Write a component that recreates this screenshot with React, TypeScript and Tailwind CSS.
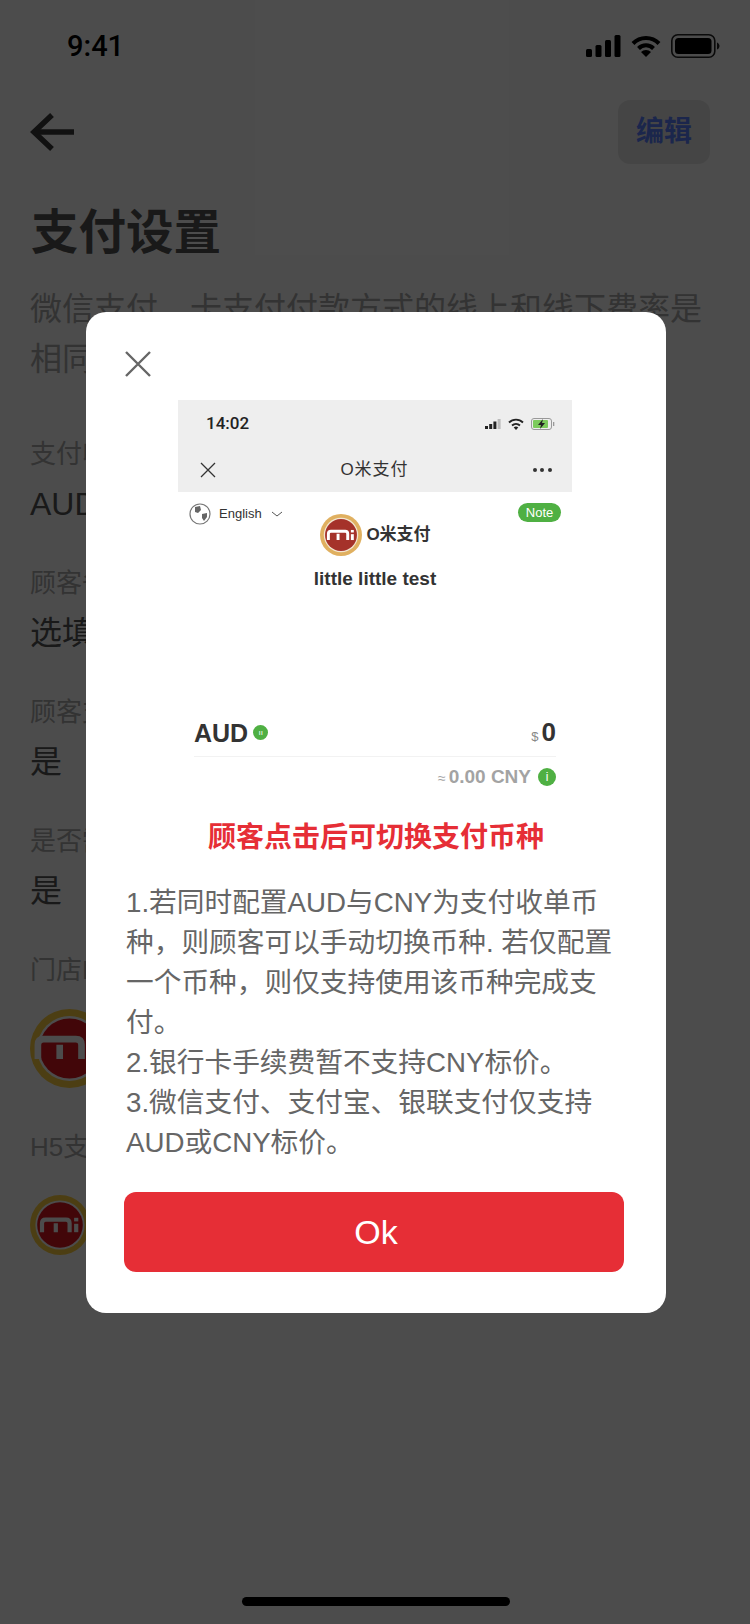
const sans = "font-['Liberation_Sans','Noto_Sans_CJK_SC',sans-serif]";

function MiLogo({ className, ring, red, gap, big }: { className: string; ring: string; red: string; gap: string; big?: boolean }) {
  return (
    <svg viewBox="0 0 100 100" className={className}>
      <circle cx="50" cy="50" r="50" fill={ring} />
      <circle cx="50" cy="50" r="41" fill={gap} />
      <circle cx="50" cy="50" r="38" fill={red} />
      {/* the store logo draws the same mark larger */}
      <g transform={big ? "translate(-14 -11) scale(1.2)" : undefined}>
        <path
          d="M20 62V47q0-6 6-6h34q6 0 6 6v15M43 47v15"
          fill="none"
          stroke="#fff"
          strokeWidth="7"
        />
        <path d="M77 48v14" stroke="#fff" strokeWidth="7" />
        <rect x="73.5" y="38" width="7" height="6" fill="#fff" />
      </g>
    </svg>
  );
}

function Field({ label, value }: { label: string; value: string }) {
  return (
    <div className="mt-[43px]">
      <div className="text-[26px] leading-[36px] text-[#aaaaaa]">{label}</div>
      <div className="mt-[14px] text-[32px] leading-[36px] text-[#555555]">{value}</div>
    </div>
  );
}

function BackgroundPage() {
  return (
    <div className="px-[30px]">
      <div className="-mx-[30px] flex h-[92px] items-center justify-between pl-[67px] pr-[30px]">
        <span className="font-['Roboto'] text-[29px] font-medium leading-[36px] text-black">9:41</span>
        <div className="flex items-center gap-[10px]">
          <svg viewBox="0 0 35 22" className="h-[22px] w-[35px]">
            <rect x="0" y="14" width="6" height="8" rx="1.5" />
            <rect x="9.5" y="10" width="6" height="12" rx="1.5" />
            <rect x="19" y="5" width="6" height="17" rx="1.5" />
            <rect x="28.5" y="0" width="6" height="22" rx="1.5" />
          </svg>
          <svg viewBox="0 0 30 22" className="h-[22px] w-[30px]" fill="none" stroke="#000" strokeWidth="4">
            <path d="M2 8.5a18 18 0 0 1 26 0" />
            <path d="M7.5 13.5a10.5 10.5 0 0 1 15 0" />
            <path d="M15 22l-5-5a7 7 0 0 1 10 0z" fill="#000" stroke="none" />
          </svg>
          <svg viewBox="0 0 49 24" className="h-[24px] w-[49px]">
            <rect x="0.8" y="0.8" width="43" height="22.4" rx="6" fill="none" stroke="#222" strokeWidth="1.6" />
            <rect x="4" y="4" width="36.5" height="16" rx="3.5" />
            <path d="M46 8.5c1.5.5 2.5 2 2.5 3.5s-1 3-2.5 3.5z" fill="#222" />
          </svg>
        </div>
      </div>

      <div className="flex h-[80px] items-center justify-between pr-[10px]">
        <svg viewBox="0 0 44 38" className="h-[38px] w-[44px]" fill="none" stroke="#3a3a3a" strokeWidth="5.5">
          <path d="M44 19H5" />
          <path d="M22 2L4 19l18 17" />
        </svg>
        <div className="flex h-[64px] w-[92px] items-center justify-center rounded-[12px] bg-[#e8e8e8] text-[28px] font-semibold text-[#5a80ff]">
          编辑
        </div>
      </div>

      <h1 className="ml-[1px] mt-[31px] text-[47.5px] font-bold leading-[60px] text-[#555555]">支付设置</h1>
      <p className="mt-[21px] text-[32px] leading-[50px] text-[#aaaaaa]">
        微信支付、卡支付付款方式的线上和线下费率是相同的
      </p>

      <div className="pt-[9px]">
        <Field label="支付收单币种" value="AUD" />
        <Field label="顾客备注" value="选填" />
        <Field label="顾客支付" value="是" />
        <Field label="是否需要" value="是" />
      </div>

      <div className="mt-[43px] text-[26px] leading-[36px] text-[#aaaaaa]">门店LOGO</div>
      <MiLogo big className="mt-[21px] h-[79px] w-[79px]" ring="#ffd040" gap="#ffffff" red="#dc161e" />
      <div className="mt-[41px] text-[26px] leading-[36px] text-[#aaaaaa]">H5支付页</div>
      <MiLogo className="mt-[30px] h-[60px] w-[60px]" ring="#ffd040" gap="#ffffff" red="#dc161e" />
    </div>
  );
}

function ScreenshotPreview() {
  return (
    <div className="ml-[54px] mt-[23px] w-[394px]">
      <div className="h-[92px] bg-[#eeeeee]">
        <div className="flex h-[48px] items-center justify-between pl-[28px] pr-[17px]">
          <span className="font-['Roboto'] text-[17px] font-medium text-[#222222]">14:02</span>
          <div className="flex items-center gap-[7px]">
            <svg viewBox="0 0 16 10" className="h-[10px] w-[16px]">
              <rect x="0" y="7" width="3" height="3" fill="#222" />
              <rect x="4.2" y="5" width="3" height="5" fill="#222" />
              <rect x="8.4" y="2.5" width="3" height="7.5" fill="#222" />
              <rect x="12.6" y="0" width="3" height="10" fill="#bbb" />
            </svg>
            <svg viewBox="0 0 16 12" className="h-[12px] w-[16px]" fill="none" stroke="#222" strokeWidth="1.8">
              <path d="M1 4.5a10 10 0 0 1 14 0" />
              <path d="M4 7.5a6 6 0 0 1 8 0" />
              <path d="M8 12l-2.3-2.4a3.4 3.4 0 0 1 4.6 0z" fill="#222" stroke="none" />
            </svg>
            <svg viewBox="0 0 24 12" className="h-[12px] w-[24px]">
              <rect x="0.5" y="0.5" width="20" height="11" rx="2.5" fill="none" stroke="#999" />
              <rect x="2" y="2" width="15" height="8" rx="1" fill="#7ccb5c" />
              <path d="M12 1L7 7h3l-1 4 5-6h-3z" fill="#222" />
              <rect x="22" y="4" width="1.3" height="4" fill="#999" />
            </svg>
          </div>
        </div>
        <div className="flex h-[44px] items-center justify-between pl-[22px] pr-[20px]">
          <svg viewBox="0 0 16 16" className="h-[16px] w-[16px]" fill="none" stroke="#333" strokeWidth="1.3">
            <path d="M1 1l14 14M15 1L1 15" />
          </svg>
          <span className="text-[17px] leading-[20px] tracking-[1px] text-[#333333]">O米支付</span>
          <div className="flex gap-[3.5px]">
            <span className="h-[4px] w-[4px] rounded-full bg-[#333333]" />
            <span className="h-[4px] w-[4px] rounded-full bg-[#333333]" />
            <span className="h-[4px] w-[4px] rounded-full bg-[#333333]" />
          </div>
        </div>
      </div>

      <div className="flex items-start justify-between pl-[11px] pr-[11px] pt-[11px]">
        <div className="flex items-center">
          <svg viewBox="0 0 22 22" className="h-[22px] w-[22px]">
            <circle cx="11" cy="11" r="10" fill="#fff" stroke="#777" strokeWidth="1.2" />
            <path d="M6 4l5-1 1 4-3 3-3-1zM13 11l5-1 0 4-3 4-2-3z" fill="#666" />
          </svg>
          <span className="ml-[8px] text-[13px] text-[#333333]">English</span>
          <svg viewBox="0 0 12 7" className="ml-[9px] h-[7px] w-[12px]" fill="none" stroke="#555" strokeWidth="1">
            <path d="M1 1l5 4 5-4" />
          </svg>
        </div>
        <span className="flex h-[19px] w-[43px] items-center justify-center rounded-full bg-[#4fb043] text-[13px] text-white">
          Note
        </span>
      </div>

      <div className="-mt-[11px] flex items-center justify-center gap-[4px] pl-[1px]">
        <MiLogo className="h-[42px] w-[42px]" ring="#e0b060" gap="#f2e6d2" red="#a5322a" />
        <span className="text-[17px] font-bold leading-[24px] text-[#333333]">O米支付</span>
      </div>
      <div className="mt-[12px] text-center text-[19px] font-bold leading-[22px] text-[#333333]">little little test</div>

      <div className="mx-[16px] mt-[126px] flex h-[41px] items-center justify-between border-b border-[#f2f2f2] pb-[7px]">
        <div className="flex items-center gap-[5px]">
          <span className="text-[25px] font-bold leading-[28px] text-[#333333]">AUD</span>
          <span className="flex h-[15px] w-[15px] items-center justify-center rounded-full bg-[#4fb043] text-[8px] leading-none text-white">
            ıı
          </span>
        </div>
        <div className="flex items-baseline gap-[3px]">
          <span className="text-[13px] text-[#888888]">$</span>
          <span className="text-[26px] font-bold leading-[28px] text-[#333333]">0</span>
        </div>
      </div>
      <div className="mx-[16px] mt-[9px] flex h-[22px] items-center justify-end gap-[7px]">
        <span className="text-[19px] font-bold leading-[22px] text-[#a3a3a3]">
          <span className="mr-[3px] text-[14px] font-normal">≈</span>0.00 CNY
        </span>
        <span className="flex h-[18px] w-[18px] items-center justify-center rounded-full bg-[#4fb043] text-[12px] leading-none text-white">
          i
        </span>
      </div>
    </div>
  );
}

export default function App() {
  return (
    <div className={`relative h-[1624px] w-[750px] overflow-hidden bg-white ${sans}`}>
      <BackgroundPage />

      <div className="absolute inset-0 bg-black/70">
        <div className="ml-[86px] mt-[312px] h-[1001px] w-[580px] rounded-[20px] bg-white px-[38px] pt-[39px]">
          <svg viewBox="0 0 26 26" className="ml-[1px] h-[26px] w-[26px]" fill="none" stroke="#666" strokeWidth="2.4">
            <path d="M1 1l24 24M25 1L1 25" />
          </svg>

          <ScreenshotPreview />

          <div className="mt-[30px] text-center text-[28px] font-bold leading-[40px] text-[#e62e36]">
            顾客点击后可切换支付币种
          </div>
          <p className="ml-[2px] mt-[25px] text-[27.7px] leading-[40px] text-[#666666]">
            1.若同时配置AUD与CNY为支付收单币种，则顾客可以手动切换币种. 若仅配置一个币种，则仅支持使用该币种完成支付。
            <br />
            2.银行卡手续费暂不支持CNY标价。
            <br />
            3.微信支付、支付宝、银联支付仅支持AUD或CNY标价。
          </p>
          <button className="mt-[29px] h-[80px] w-[500px] rounded-[12px] bg-[#e62e36] pl-[4px] text-[34px] text-white">Ok</button>
        </div>

        <div className="absolute bottom-[18px] left-[242px] h-[9px] w-[268px] rounded-full bg-black" />
      </div>
    </div>
  );
}
